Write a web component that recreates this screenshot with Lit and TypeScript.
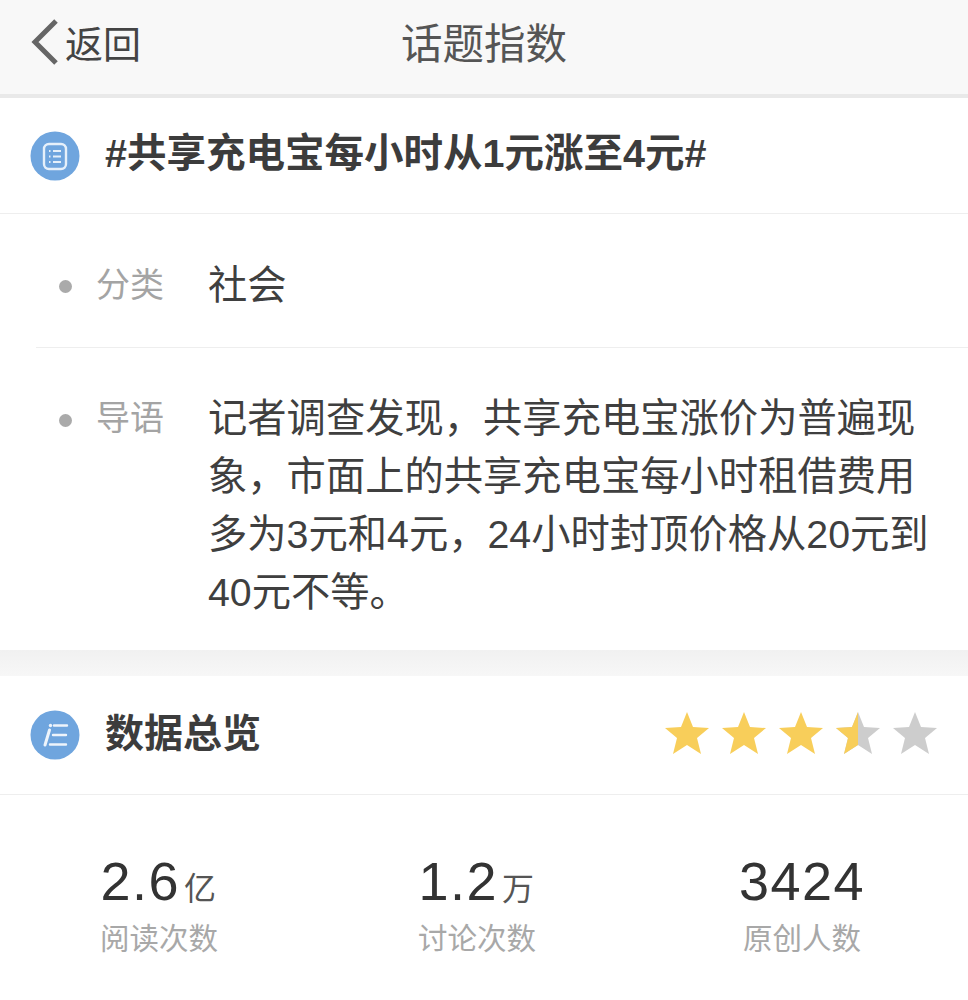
import { LitElement, html, css, svg } from "lit";
import { customElement } from "lit/decorators.js";

const STAR = "M0 -22 L6 -7 L22 -6 L10 4 L14 20 L0 11 L-14 20 L-10 4 L-22 -6 L-6 -7 Z";

@customElement("app-root")
export class AppRoot extends LitElement {
  static styles = css`
    :host {
      display: block;
      width: 968px;
      height: 1000px;
      overflow: hidden;
      background: #fff;
      font-family: "Liberation Sans", "Noto Sans CJK SC", sans-serif;
      color: #3a3a3a;
    }
    .nav {
      height: 94px;
      box-sizing: content-box;
      background: #f8f8f8;
      border-bottom: 4px solid #e9e9e9;
      display: grid;
      grid-template-columns: 1fr auto 1fr;
      align-items: center;
      padding-left: 30px;
    }
    .back { display: flex; align-items: center; gap: 5px; font-size: 38px; line-height: 48px; color: #444; margin-top: -4px; }
    .back svg { display: block; margin-top: -6px; }
    .nav-title { font-size: 41.5px; line-height: 48px; color: #555; margin-left: -30px; margin-top: -4px; }
    .head {
      height: 116px;
      display: flex;
      align-items: center;
      gap: 25px;
      padding: 0 30px;
      border-bottom: 1px solid #eeeeee;
      box-sizing: border-box;
    }
    .head h2 { margin: -3px 0 0; font-size: 39px; line-height: 1; font-weight: 700; color: #3c3c3c; }
    .head svg.ic { flex: none; display: block; }
    .topic-title { font-size: 39.5px !important; white-space: nowrap; }
    .row { display: grid; grid-template-columns: 60px 112px 1fr; margin-left: 36px; }
    .row.one { height: 133px; align-items: center; border-bottom: 1px solid #eeeeee; }
    .row.one .label, .row.one .value { margin-top: 9px; }
    .row.one .dot { margin-top: 12px; }
    .row.two { padding-top: 41px; height: 302px; box-sizing: border-box; }
    .dot { width: 13px; height: 13px; border-radius: 50%; background: #aaaaaa; justify-self: start; margin-left: 23px; }
    .row.two .dot { margin-top: 25px; }
    .label { font-size: 34px; color: #a4a4a4; line-height: 58px; }
    .value { font-size: 39.3px; color: #3f3f3f; line-height: 58px; white-space: pre; }
    .gap { height: 26px; background: linear-gradient(#f1f1f1, #f7f7f7); }
    .head.data { height: 119px; }
    .head.data h2 { flex: 1; }
    .stars { display: block; flex: none; margin-top: -2px; }
    .stats { display: grid; grid-template-columns: 318px 318px 332px; }
    .stat { display: flex; flex-direction: column; align-items: center; padding-top: 57px; }
    .num { height: 58px; font-size: 54px; line-height: 58px; color: #333; letter-spacing: 1.5px; white-space: nowrap; }
    .unit { font-size: 32px; color: #555; margin-left: 4px; }
    .cap { font-size: 29.5px; color: #a8a8a8; margin-top: 9px; line-height: 40px; }
  `;

  private stars() {
    const xs = [23, 80, 137, 194, 251];
    return html`<svg class="stars" width="274" height="48" viewBox="0 0 274 48">
      <defs>
        <clipPath id="l"><rect x="-30" y="-30" width="30" height="60"></rect></clipPath>
      </defs>
      ${xs.map((x, i) => svg`<g transform="translate(${x} 24)">
        <path d=${STAR} fill=${i < 3 ? "#f8ce5a" : "#cdcdcd"}></path>
        ${i === 3 ? svg`<path d=${STAR} fill="#f8ce5a" clip-path="url(#l)"></path>` : ""}
      </g>`)}
    </svg>`;
  }

  render() {
    return html`
      <div class="nav">
        <div class="back">
          <svg width="30" height="48" viewBox="0 0 30 48"><path d="M26 3 L5 24 L26 45" fill="none" stroke="#666" stroke-width="5"></path></svg>
          <span>返回</span>
        </div>
        <div class="nav-title">话题指数</div>
        <div></div>
      </div>
      <div class="head">
        <svg class="ic" width="50" height="50" viewBox="0 0 50 50">
          <circle cx="25" cy="25" r="24.5" fill="#6fa5de"></circle>
          <rect x="14" y="13" width="22" height="25" rx="5" fill="none" stroke="#e6f0fa" stroke-width="2.4"></rect>
          <path d="M19 20h1.5M23 20h8M19 25.5h1.5M23 25.5h8M19 31h1.5M23 31h8" stroke="#e6f0fa" stroke-width="2"></path>
        </svg>
        <h2 class="topic-title">#共享充电宝每小时从1元涨至4元#</h2>
      </div>
      <div class="row one">
        <span class="dot"></span><span class="label">分类</span><span class="value">社会</span>
      </div>
      <div class="row two">
        <span class="dot"></span><span class="label">导语</span>
        <span class="value">记者调查发现，共享充电宝涨价为普遍现
象，市面上的共享充电宝每小时租借费用
多为3元和4元，24小时封顶价格从20元到
40元不等。</span>
      </div>
      <div class="gap"></div>
      <div class="head data">
        <svg class="ic" width="50" height="50" viewBox="0 0 50 50">
          <circle cx="25" cy="25" r="24.5" fill="#6fa5de"></circle>
          <path d="M19.5 20 L15 35" stroke="#eef4fb" stroke-width="3" stroke-linecap="round" fill="none"></path>
          <circle cx="20.5" cy="15.5" r="1.7" fill="#eef4fb"></circle>
          <path d="M24 15.5h13M23 25h13M20 34.5h16" stroke="#eef4fb" stroke-width="2.4" stroke-linecap="round" fill="none"></path>
        </svg>
        <h2>数据总览</h2>
        ${this.stars()}
      </div>
      <div class="stats">
        <div class="stat"><div class="num">2.6<span class="unit">亿</span></div><div class="cap">阅读次数</div></div>
        <div class="stat"><div class="num">1.2<span class="unit">万</span></div><div class="cap">讨论次数</div></div>
        <div class="stat"><div class="num">3424</div><div class="cap">原创人数</div></div>
      </div>
    `;
  }
}
